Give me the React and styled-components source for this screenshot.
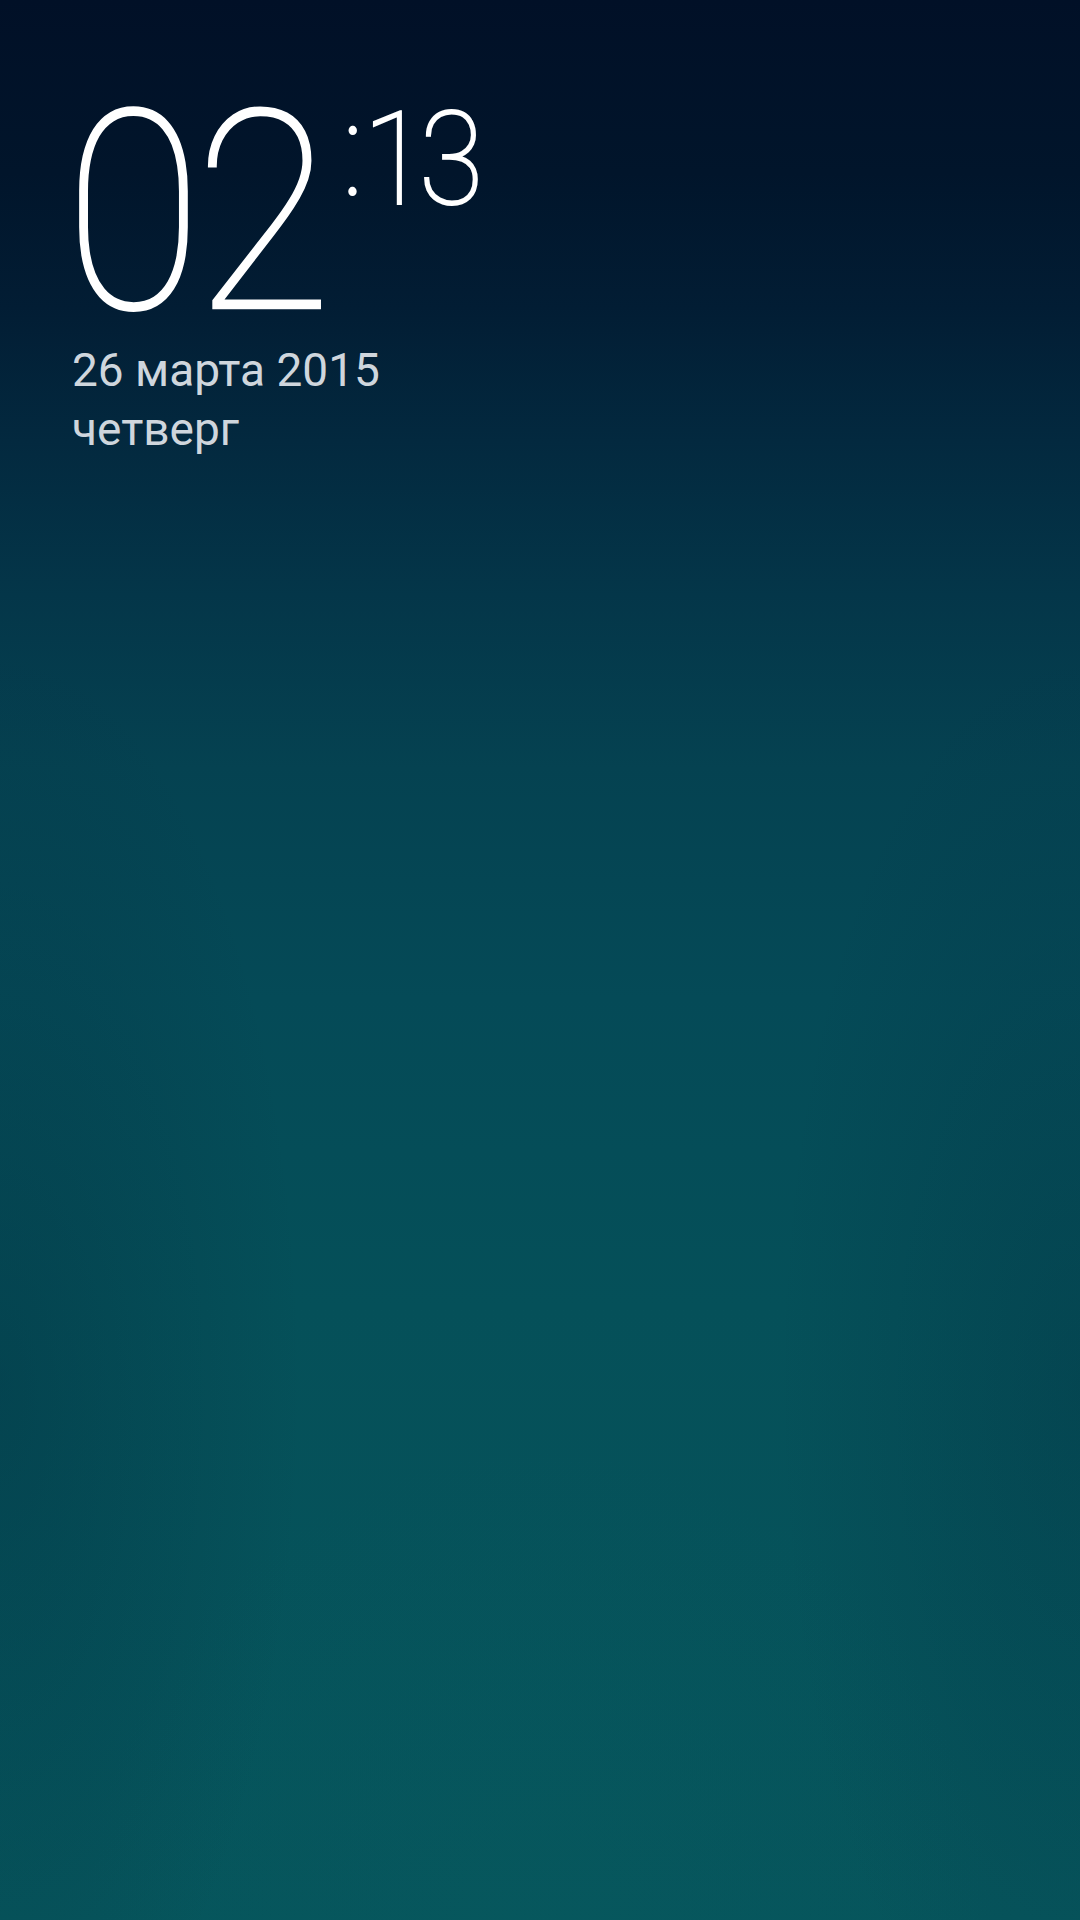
import React from "react"
import styled, { createGlobalStyle } from "styled-components"

const Global = createGlobalStyle`
  html, body {
    margin: 0;
    height: 100%;
    background: #011127;
  }
  #root {
    min-height: 100%;
  }
`

const Screen = styled.main`
  box-sizing: border-box;
  min-height: 100vh;
  padding: 86px 0 0 65px;
  font-family: Roboto, "Noto Sans", sans-serif;
  background:
    radial-gradient(ellipse 60% 35% at 50% 100%, rgba(8, 92, 96, 0.3), rgba(8, 92, 96, 0) 70%),
    radial-gradient(ellipse 40% 55% at 0% 72%, rgba(2, 38, 58, 0.3), rgba(2, 38, 58, 0) 70%),
    radial-gradient(ellipse 40% 55% at 100% 72%, rgba(2, 38, 58, 0.25), rgba(2, 38, 58, 0) 70%),
    linear-gradient(
      180deg,
      #011027 0%,
      #01152b 9%,
      #021d34 16%,
      #03293f 23%,
      #043649 31%,
      #054251 40%,
      #054a57 52%,
      #055059 68%,
      #06555c 100%
    );
`

const Clock = styled.div`
  display: flex;
  align-items: flex-start;
  color: #fff;
  font-weight: 100;
  transform: scaleX(0.9);
  transform-origin: left top;
`

const Hours = styled.span`
  font-size: 278px;
  line-height: 254px;
  letter-spacing: -8px;
  -webkit-text-stroke: 2.5px #fff;
`

const Minutes = styled.span`
  font-size: 130px;
  line-height: 134px;
  letter-spacing: -9px;
  margin: -2px 0 0 20px;
  -webkit-text-stroke: 2.2px #fff;
`

const Colon = styled.span`
  letter-spacing: 0;
  vertical-align: 9px;
`

const DateBlock = styled.div`
  margin: 1px 0 0 7px;
  color: #cfd6dd;
  font-size: 46px;
  line-height: 59px;
  font-weight: 400;
`

export default function App() {
  return (
    <>
      <Global />
      <Screen>
        <Clock>
          <Hours>02</Hours>
          <Minutes>
            <Colon>:</Colon>13
          </Minutes>
        </Clock>
        <DateBlock>
          <div>26 марта 2015</div>
          <div>четверг</div>
        </DateBlock>
      </Screen>
    </>
  )
}
